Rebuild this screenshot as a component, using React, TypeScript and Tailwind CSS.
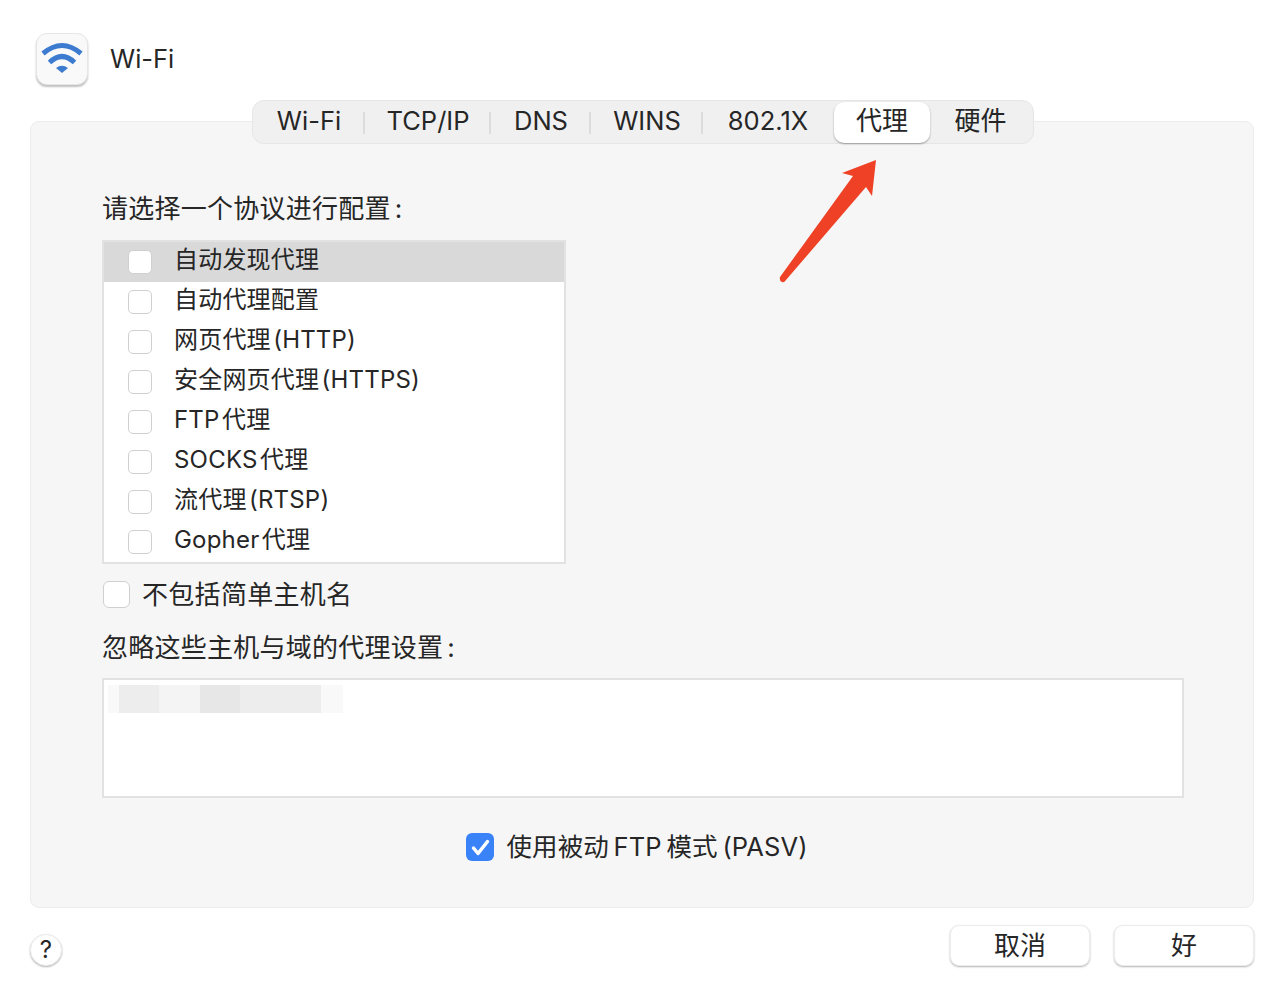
const font = "[font-family:Inter,'Noto_Sans_CJK_SC',sans-serif]";

const tabs = [
  { label: "Wi-Fi", w: "w-[112px]" },
  { label: "TCP/IP", w: "w-[126px]" },
  { label: "DNS", w: "w-[100px]" },
  { label: "WINS", w: "w-[112px]" },
  { label: "802.1X", w: "w-[130px]" },
];

const protocols = [
  "自动发现代理",
  "自动代理配置",
  "网页代理\u200a(HTTP)",
  "安全网页代理\u200a(HTTPS)",
  "FTP\u200a代理",
  "SOCKS\u200a代理",
  "流代理\u200a(RTSP)",
  "Gopher\u200a代理",
];

function WifiIcon() {
  return (
    <div className="flex h-[52px] w-[52px] items-center justify-center rounded-[11px] border border-[#e6e6e6] bg-[#f9f9f9] shadow-[0_2px_2px_rgba(0,0,0,0.25)]">
      <svg width="46" height="46" viewBox="0 0 46 46" fill="none">
        <path d="M4 17.500Q23 1.500 42 17.500" stroke="#3c7bd0" strokeWidth="5" />
        <path d="M10.500 26.500Q23 14.500 35.500 26.500" stroke="#3c7bd0" strokeWidth="5" />
        <path d="M17 32Q23 27.500 29 32L23 37Z" fill="#3c7bd0" />
      </svg>
    </div>
  );
}

function Arrow() {
  return (
    <svg className="absolute left-[748px] top-[30px]" width="110" height="136" viewBox="0 0 110 136" fill="none">
      <path d="M97 8L63 21L74 24L1 125Q0 129 3 130Q5 131 7 128L87 35L93 44Z" fill="#ee4125" />
    </svg>
  );
}

export default function App() {
  return (
    <div className={`${font} h-[1002px] w-[1288px] overflow-hidden bg-white text-[#262626]`}>
      <div className="flex h-[121px] items-start gap-[22px] pl-[36px] pt-[33px]">
        <WifiIcon />
        <div className="mt-[8px] text-[25.500px] leading-[36px]">Wi-Fi</div>
      </div>

      <div className="relative ml-[30px] mr-[34px] h-[787px] rounded-[9px] border border-[#ececec] bg-[#f6f6f6]">
        <div className="absolute left-[221px] top-[-22px] flex h-[44px] w-[782px] items-center rounded-[12px] border border-[#e6e6e6] bg-[#f0f0f0] text-[25.500px]">
          {tabs.map((t, i) => (
            <div key={t.label} className={`${t.w} relative flex h-full items-center justify-center pb-[1px]`}>
              {t.label}
              {i < 4 && <span className="absolute right-0 top-[11px] h-[22px] w-[2px] bg-[#dcdcdc]" />}
            </div>
          ))}
          <div className="ml-[1px] flex h-[41px] w-[96px] items-center justify-center rounded-[10px] bg-white pb-[3px] text-[26px] shadow-[0_1px_2px_rgba(0,0,0,0.35)]">
            代理
          </div>
          <div className="flex h-full flex-1 items-center justify-center pb-[3px] pr-[2px] text-[26px]">硬件</div>
        </div>

        <Arrow />

        <div className="flex h-full flex-col pl-[71px] pr-[69px] pt-[69px]">
          <div className="text-[26px] leading-[36px] tracking-[0.25px]">
            请选择一个协议进行配置<span className="ml-[4px]">:</span>
          </div>

          <div className="mt-[13px] h-[324px] w-[464px] border-2 border-[#e2e2e2] bg-white">
            {protocols.map((p, i) => (
              <div
                key={p}
                className={`flex h-[40px] items-center pl-[24px] text-[24px] tracking-[0.2px] ${i === 0 ? "bg-[#d9d9d9]" : ""}`}
              >
                <span className="h-[24px] w-[24px] shrink-0 rounded-[5px] border border-[#d0d0d0] bg-white" />
                <span className="mb-[4px] ml-[22px] whitespace-nowrap">{p}</span>
              </div>
            ))}
          </div>

          <div className="mt-[15px] flex h-[30px] items-center">
            <span className="ml-px h-[27px] w-[27px] shrink-0 rounded-[6px] border border-[#d0d0d0] bg-white" />
            <span className="ml-[12px] text-[26px] tracking-[0.3px]">不包括简单主机名</span>
          </div>

          <div className="mt-[21px] text-[26px] leading-[36px] tracking-[0.25px]">
            忽略这些主机与域的代理设置<span className="ml-[4px]">:</span>
          </div>

          <div className="mt-[12px] h-[120px] border-2 border-[#e2e2e2] bg-white pl-[4px] pt-[5px]">
            <div className="flex h-[28px] w-[235px]">
              <div className="w-[11px] bg-[#f9f9f9]" />
              <div className="w-[40px] bg-[#ededed]" />
              <div className="w-[41px] bg-[#f4f4f4]" />
              <div className="w-[40px] bg-[#e7e7e7]" />
              <div className="w-[81px] bg-[#ededed]" />
              <div className="w-[22px] bg-[#f9f9f9]" />
            </div>
          </div>

          <div className="mt-[30px] flex items-center justify-center pr-[12px]">
            <span className="flex h-[28px] w-[28px] items-center justify-center rounded-[6px] bg-[#3a82f7]">
              <svg width="28" height="28" viewBox="0 0 28 28" fill="none">
                <path d="M7.500 15L12 20.500L21.500 8.500" stroke="white" strokeWidth="3.500" strokeLinecap="round" strokeLinejoin="round" />
              </svg>
            </span>
            <span className="ml-[12px] mt-[1px] whitespace-nowrap text-[25.500px] leading-[36px] tracking-[0.1px]">
              使用被动{"\u2009"}FTP{"\u2009"}模式{"\u2009"}(PASV)
            </span>
          </div>
        </div>
      </div>

      <div className="flex items-start justify-between pl-[30px] pr-[34px] pt-[17px]">
        <div className="mt-[9px] flex h-[32px] w-[32px] items-center justify-center rounded-full border border-[#ececec] bg-white text-[24px] shadow-[0_1px_2px_rgba(0,0,0,0.3)]">
          ?
        </div>
        <div className="flex gap-[24px] text-[26px]">
          <button className="flex h-[41px] w-[140px] items-center justify-center rounded-[9px] border border-[#ececec] bg-white pb-[1px] shadow-[0_1px_2px_rgba(0,0,0,0.3)]">
            取消
          </button>
          <button className="flex h-[41px] w-[140px] items-center justify-center rounded-[9px] border border-[#ececec] bg-white pb-[1px] shadow-[0_1px_2px_rgba(0,0,0,0.3)]">
            好
          </button>
        </div>
      </div>
    </div>
  );
}
